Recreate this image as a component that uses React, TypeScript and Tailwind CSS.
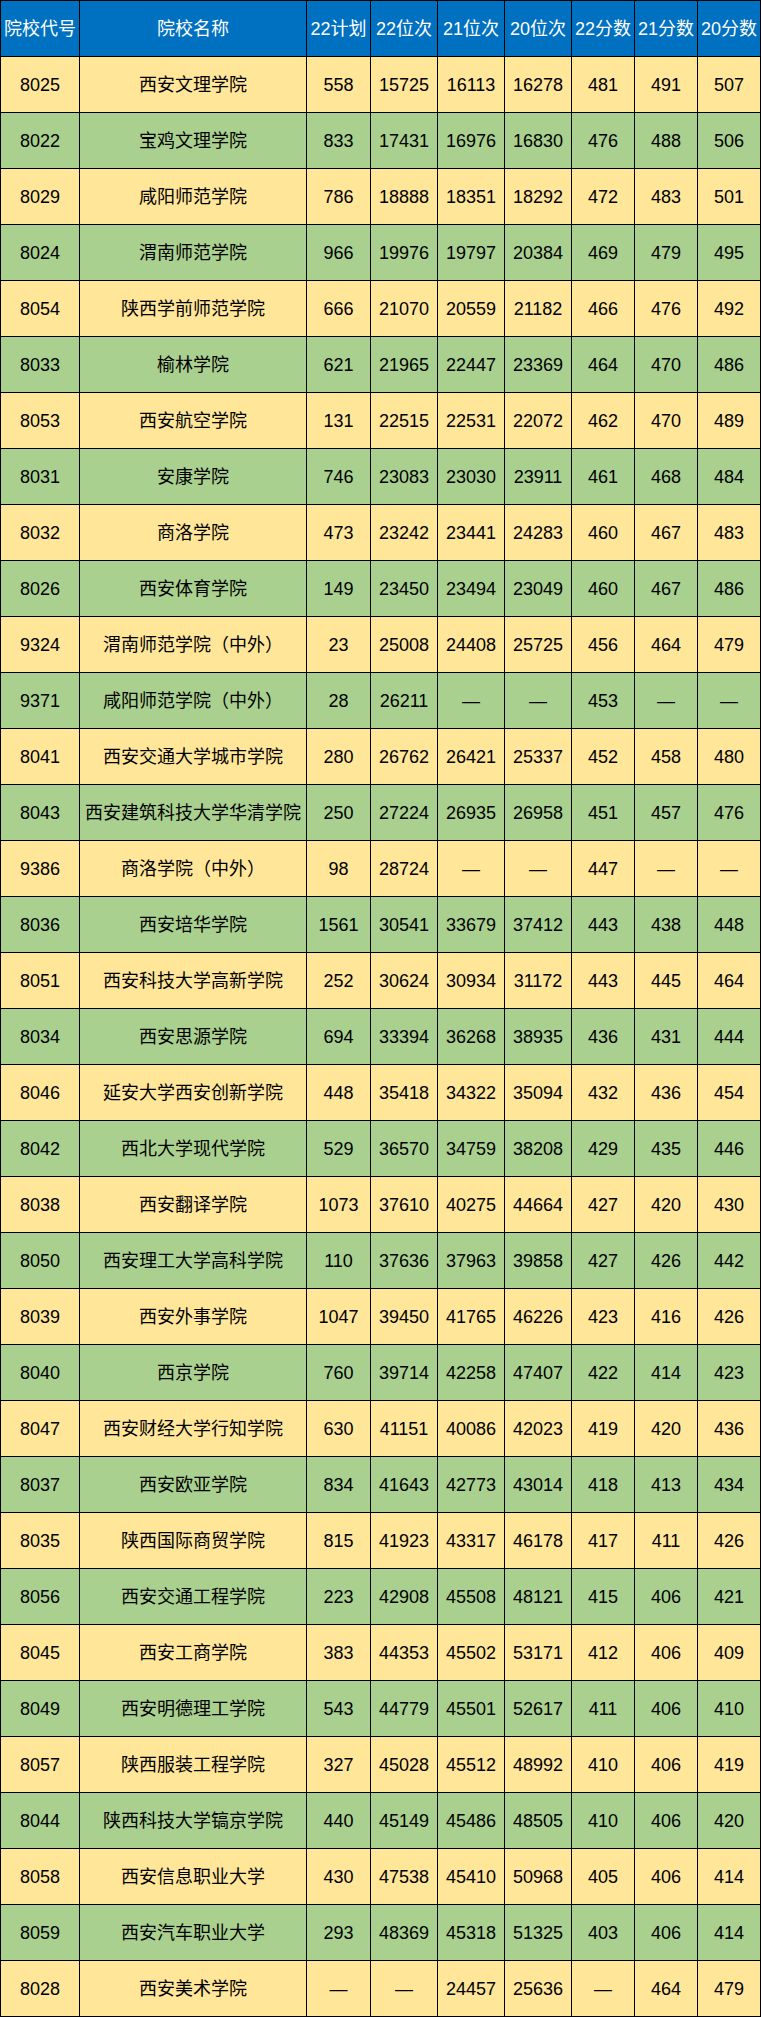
const headers = ["院校代号", "院校名称", "22计划", "22位次", "21位次", "20位次", "22分数", "21分数", "20分数"];

const rows: string[][] = [
  ["8025", "西安文理学院", "558", "15725", "16113", "16278", "481", "491", "507"],
  ["8022", "宝鸡文理学院", "833", "17431", "16976", "16830", "476", "488", "506"],
  ["8029", "咸阳师范学院", "786", "18888", "18351", "18292", "472", "483", "501"],
  ["8024", "渭南师范学院", "966", "19976", "19797", "20384", "469", "479", "495"],
  ["8054", "陕西学前师范学院", "666", "21070", "20559", "21182", "466", "476", "492"],
  ["8033", "榆林学院", "621", "21965", "22447", "23369", "464", "470", "486"],
  ["8053", "西安航空学院", "131", "22515", "22531", "22072", "462", "470", "489"],
  ["8031", "安康学院", "746", "23083", "23030", "23911", "461", "468", "484"],
  ["8032", "商洛学院", "473", "23242", "23441", "24283", "460", "467", "483"],
  ["8026", "西安体育学院", "149", "23450", "23494", "23049", "460", "467", "486"],
  ["9324", "渭南师范学院（中外）", "23", "25008", "24408", "25725", "456", "464", "479"],
  ["9371", "咸阳师范学院（中外）", "28", "26211", "—", "—", "453", "—", "—"],
  ["8041", "西安交通大学城市学院", "280", "26762", "26421", "25337", "452", "458", "480"],
  ["8043", "西安建筑科技大学华清学院", "250", "27224", "26935", "26958", "451", "457", "476"],
  ["9386", "商洛学院（中外）", "98", "28724", "—", "—", "447", "—", "—"],
  ["8036", "西安培华学院", "1561", "30541", "33679", "37412", "443", "438", "448"],
  ["8051", "西安科技大学高新学院", "252", "30624", "30934", "31172", "443", "445", "464"],
  ["8034", "西安思源学院", "694", "33394", "36268", "38935", "436", "431", "444"],
  ["8046", "延安大学西安创新学院", "448", "35418", "34322", "35094", "432", "436", "454"],
  ["8042", "西北大学现代学院", "529", "36570", "34759", "38208", "429", "435", "446"],
  ["8038", "西安翻译学院", "1073", "37610", "40275", "44664", "427", "420", "430"],
  ["8050", "西安理工大学高科学院", "110", "37636", "37963", "39858", "427", "426", "442"],
  ["8039", "西安外事学院", "1047", "39450", "41765", "46226", "423", "416", "426"],
  ["8040", "西京学院", "760", "39714", "42258", "47407", "422", "414", "423"],
  ["8047", "西安财经大学行知学院", "630", "41151", "40086", "42023", "419", "420", "436"],
  ["8037", "西安欧亚学院", "834", "41643", "42773", "43014", "418", "413", "434"],
  ["8035", "陕西国际商贸学院", "815", "41923", "43317", "46178", "417", "411", "426"],
  ["8056", "西安交通工程学院", "223", "42908", "45508", "48121", "415", "406", "421"],
  ["8045", "西安工商学院", "383", "44353", "45502", "53171", "412", "406", "409"],
  ["8049", "西安明德理工学院", "543", "44779", "45501", "52617", "411", "406", "410"],
  ["8057", "陕西服装工程学院", "327", "45028", "45512", "48992", "410", "406", "419"],
  ["8044", "陕西科技大学镐京学院", "440", "45149", "45486", "48505", "410", "406", "420"],
  ["8058", "西安信息职业大学", "430", "47538", "45410", "50968", "405", "406", "414"],
  ["8059", "西安汽车职业大学", "293", "48369", "45318", "51325", "403", "406", "414"],
  ["8028", "西安美术学院", "—", "—", "24457", "25636", "—", "464", "479"],
];

export default function App() {
  return (
    <div className="w-[761px] bg-white font-['Liberation_Sans','Noto_Sans_CJK_SC',sans-serif] text-[18px] leading-none">
      <div className="grid grid-cols-[78px_226px_63px_66px_66px_66px_62px_62px_62px] auto-rows-[55px] gap-px bg-black p-px">
        {headers.map((h) => (
          <div key={h} className="flex items-center justify-center bg-[#0070c0] text-white whitespace-nowrap">
            {h}
          </div>
        ))}
        {rows.map((row, i) =>
          row.map((cell, j) => (
            <div
              key={`${i}-${j}`}
              className={`flex items-center justify-center whitespace-nowrap text-black ${
                i % 2 === 0 ? "bg-[#ffe699]" : "bg-[#a9d08e]"
              }`}
            >
              {cell}
            </div>
          ))
        )}
      </div>
    </div>
  );
}
